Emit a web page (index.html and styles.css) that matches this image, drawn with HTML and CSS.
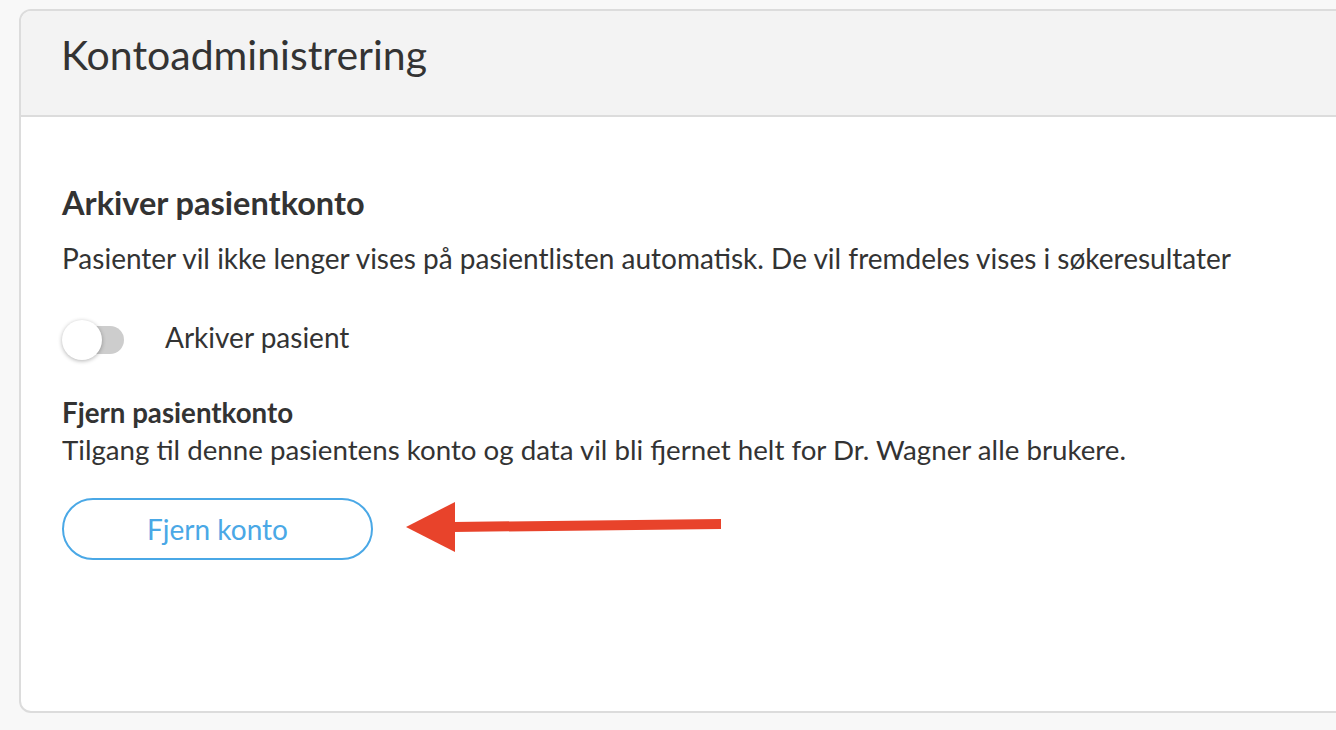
FILE: index.html
```html
<!DOCTYPE html>
<html lang="no">
<head>
<meta charset="utf-8">
<title>Kontoadministrering</title>
<link rel="stylesheet" href="styles.css">
</head>
<body>
<div class="card">
  <div class="card-header">
    <h1 class="card-title">Kontoadministrering</h1>
  </div>
  <div class="card-body">
    <h2 class="section-title">Arkiver pasientkonto</h2>
    <p class="section-text">Pasienter vil ikke lenger vises på pasientlisten automatisk. De vil fremdeles vises i søkeresultater</p>
    <div class="toggle-row">
      <div class="toggle">
        <span class="toggle-track"></span>
        <span class="toggle-knob"></span>
      </div>
      <span class="toggle-label">Arkiver pasient</span>
    </div>
    <h3 class="sub-title">Fjern pasientkonto</h3>
    <p class="sub-text">Tilgang til denne pasientens konto og data vil bli fjernet helt for Dr. Wagner alle brukere.</p>
    <div class="action-row">
      <button class="btn-outline">Fjern konto</button>
      <svg class="arrow" width="320" height="52" viewBox="0 0 320 52" aria-hidden="true">
        <polygon points="2,26 51,1 51,51" fill="#e8432b"/>
        <polygon points="49,21 317,18 317,28 49,31" fill="#e8432b"/>
      </svg>
    </div>
  </div>
</div>
</body>
</html>
```
FILE: styles.css
```css
html, body {
  margin: 0;
  padding: 0;
}
body {
  background: #f8f8f8;
  font-family: Lato, "Open Sans", sans-serif;
  color: #333333;
  overflow: hidden;
  height: 730px;
}
.card {
  margin: 9px 0 0 19px;
  width: 1400px;
  background: #ffffff;
  border: 2px solid #dcdcdc;
  border-radius: 12px;
  overflow: hidden;
}
.card-header {
  box-sizing: border-box;
  height: 106px;
  background: #f3f3f3;
  border-bottom: 2px solid #dcdcdc;
  padding: 20px 0 0 40px;
}
.card-title {
  margin: 0;
  font-size: 41px;
  font-weight: 400;
  line-height: 48px;
  color: #333;
}
.card-body {
  padding: 70px 0 151px 41px;
}
.section-title {
  margin: 0;
  font-size: 32.5px;
  font-weight: 700;
  line-height: 32px;
}
.section-text {
  margin: 23px 0 0;
  font-size: 28px;
  line-height: 32px;
}
.toggle-row {
  margin-top: 44px;
  height: 44px;
  display: flex;
  align-items: center;
}
.toggle {
  position: relative;
  width: 62px;
  height: 44px;
}
.toggle-track {
  display: block;
  margin: 8px 0 0 4px;
  width: 58px;
  height: 28px;
  border-radius: 14px;
  background: #cdcdcd;
}
.toggle-knob {
  position: absolute;
  left: 0;
  top: 2px;
  width: 40px;
  height: 40px;
  border-radius: 50%;
  background: #ffffff;
  box-shadow: 0 1px 4px rgba(0, 0, 0, 0.3);
}
.toggle-label {
  margin-left: 41px;
  padding-bottom: 6px;
  font-size: 28px;
  line-height: 32px;
}
.sub-title {
  margin: 35px 0 0;
  font-size: 27.7px;
  font-weight: 700;
  line-height: 32px;
}
.sub-text {
  margin: 5px 0 0;
  font-size: 27.7px;
  line-height: 32px;
}
.action-row {
  margin-top: 32px;
  display: flex;
  align-items: center;
}
.btn-outline {
  width: 311px;
  height: 62px;
  border: 2px solid #4aa8e6;
  border-radius: 31px;
  background: #ffffff;
  color: #4aa8e6;
  font-family: Lato, "Open Sans", sans-serif;
  font-size: 28px;
  padding: 0;
}
.arrow {
  display: block;
  margin-left: 31px;
  margin-top: -4px;
}
```
